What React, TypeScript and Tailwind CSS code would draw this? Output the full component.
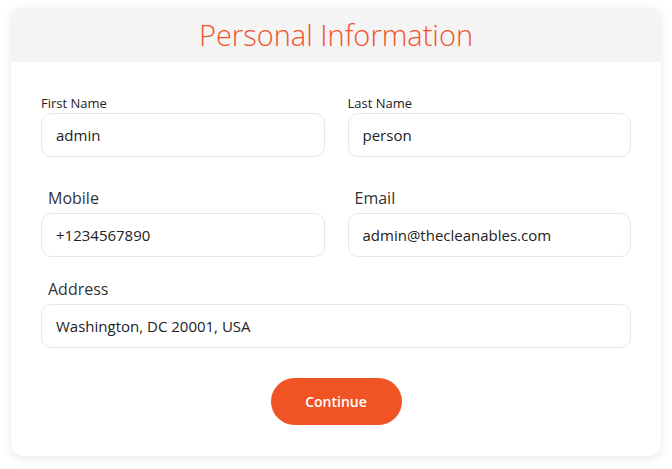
const inputCls =
  'h-[44px] w-full rounded-[10px] border border-[#e8e8e8] bg-white px-[14px] text-[15px] text-[#222] outline-none'

const Field = ({
  label,
  value,
  small,
}: {
  label: string
  value: string
  small?: boolean
}) => (
  <div className="flex flex-col">
    {small ? (
      <label className="mb-[2px] h-[16px] text-[13px] leading-[16px] text-[#222]">
        {label}
      </label>
    ) : (
      <label className="mb-[5px] h-[20px] pl-[7px] text-[16px] leading-[20px] text-[#333]">
        {label}
      </label>
    )}
    <input className={inputCls} defaultValue={value} />
  </div>
)

export default function App() {
  return (
    <div
      className="min-h-[469px] bg-white pl-[11px] pt-[8px]"
      style={{ fontFamily: '"Open Sans", "Noto Sans", sans-serif' }}
    >
      <div className="w-[650px] overflow-hidden rounded-[12px] bg-white shadow-[0_2px_10px_rgba(0,0,0,0.10)]">
        <div className="flex h-[54px] items-center justify-center bg-[#f4f4f4]">
          <h1 className="text-[29px] font-light text-[#f0532a]">
            Personal Information
          </h1>
        </div>

        <form className="flex flex-col px-[30px] pb-[31px] pt-[33px]">
          <div className="grid grid-cols-2 gap-x-[23px]">
            <Field label="First Name" value="admin" small />
            <Field label="Last Name" value="person" small />
          </div>

          <div className="mt-[31px] grid grid-cols-2 gap-x-[23px]">
            <Field label="Mobile" value="+1234567890" />
            <Field label="Email" value="admin@thecleanables.com" />
          </div>

          <div className="mt-[22px]">
            <Field label="Address" value="Washington, DC 20001, USA" />
          </div>

          <div className="mt-[30px] flex justify-center">
            <button
              type="button"
              className="h-[47px] w-[131px] rounded-full bg-[#f05324] text-[14px] font-semibold text-white"
            >
              Continue
            </button>
          </div>
        </form>
      </div>
    </div>
  )
}
